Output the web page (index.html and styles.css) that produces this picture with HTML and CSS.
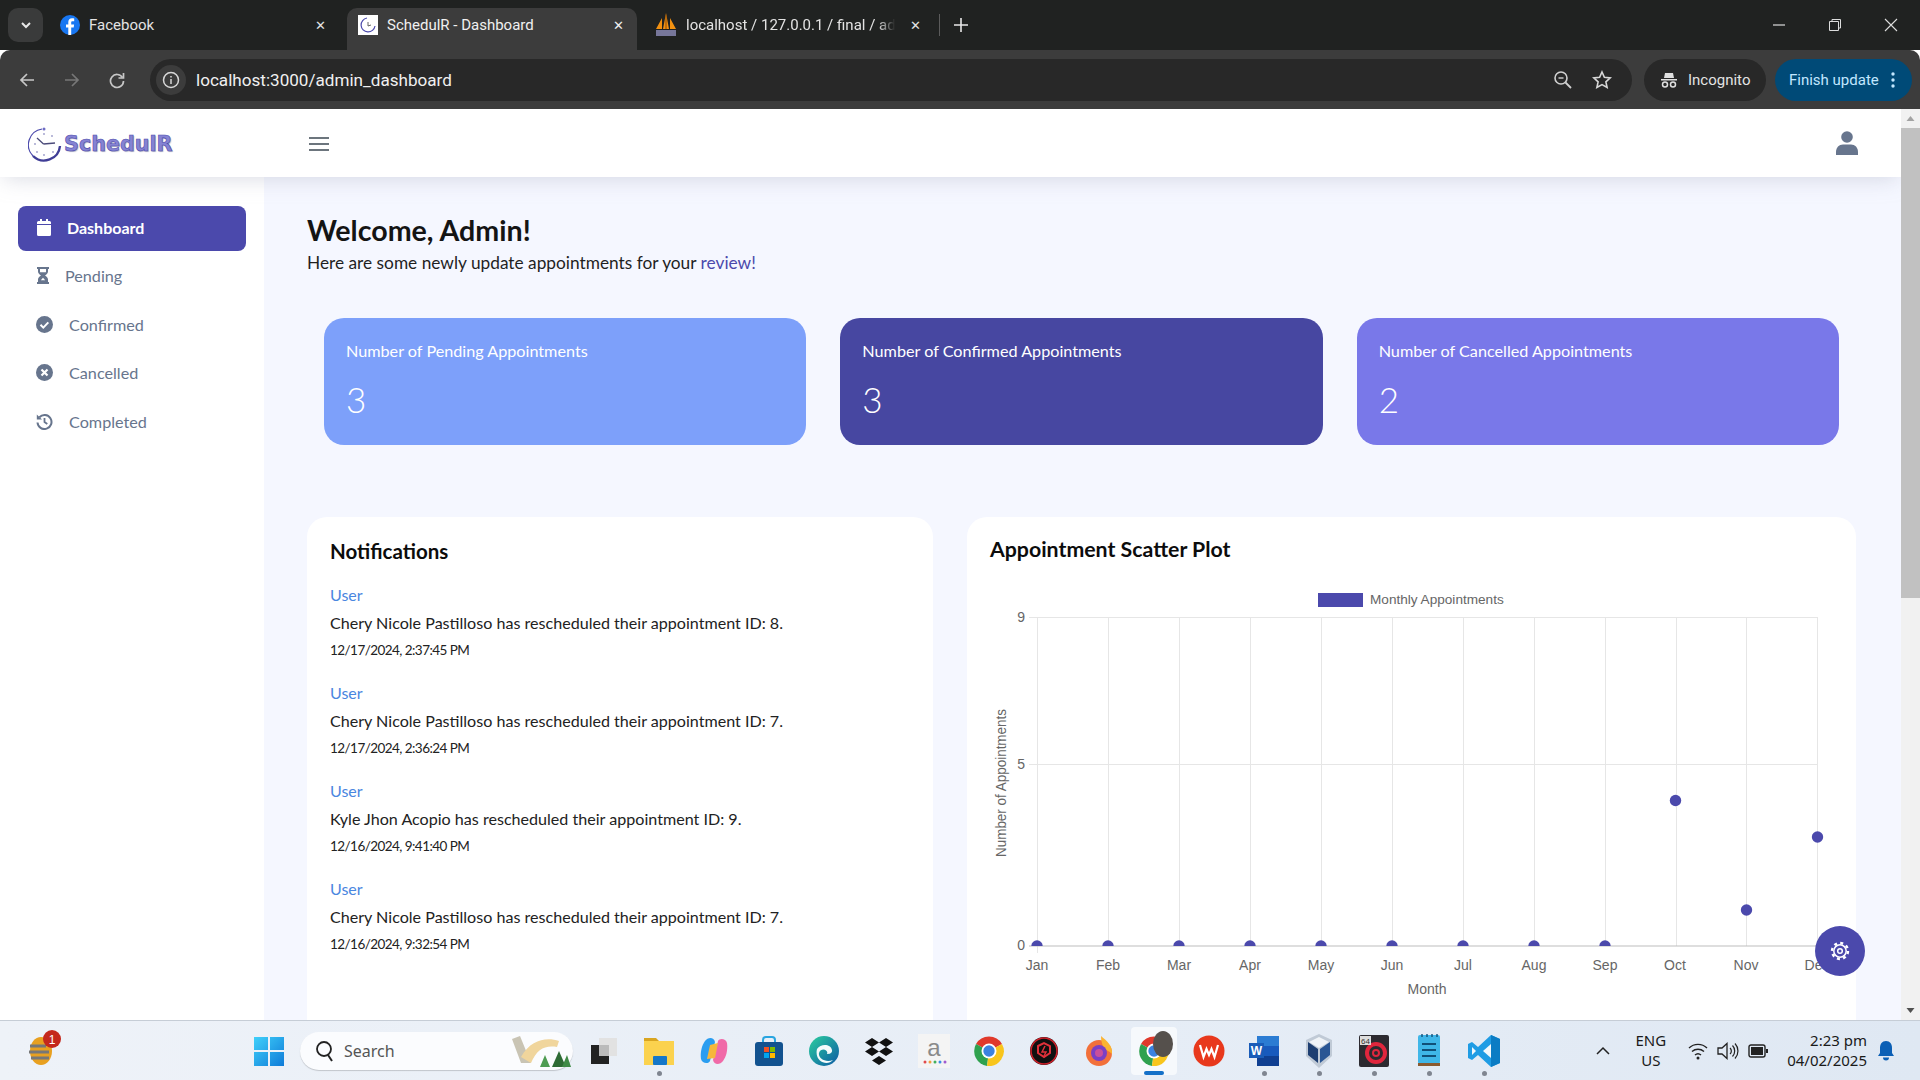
FILE: index.html
```html
<!DOCTYPE html>
<html lang="en">
<head>
  <meta charset="UTF-8">
  <title>SchedulR - Dashboard</title>
  <link rel="stylesheet" href="styles.css">
</head>
<body>
  <!-- browser tabs -->
  <div class="tabstrip">
    <div class="tab-menu"><svg width="12" height="12" viewBox="0 0 12 12"><path d="M2 4l4 4 4-4" fill="none" stroke="#e8e8e8" stroke-width="2"/></svg></div>
    <div class="tab tab-fb">
      <svg class="favicon" width="20" height="20" viewBox="0 0 20 20"><circle cx="10" cy="10" r="10" fill="#1877f2"/><path d="M11.2 20v-7.6h2.5l.4-3h-2.9V7.6c0-.9.3-1.4 1.5-1.4h1.5V3.500c-.5-.1-1.300-.2-2.200-.2-2.200 0-3.700 1.300-3.700 3.800v2.300H6v3h2.300V20z" fill="#fff"/></svg>
      <span class="tab-title">Facebook</span>
      <span class="tab-x">✕</span>
    </div>
    <div class="tab tab-active">
      <svg class="favicon" width="20" height="20" viewBox="0 0 20 20"><rect width="20" height="20" fill="#fff"/><path d="M9 3a7 7 0 1 0 8 8" fill="none" stroke="#4b49ac" stroke-width="1.200"/><path d="M10 7v4l3-1" fill="none" stroke="#555" stroke-width=".9"/></svg>
      <span class="tab-title">SchedulR - Dashboard</span>
      <span class="tab-x">✕</span>
    </div>
    <div class="tab tab-pma">
      <svg class="favicon" width="22" height="24" viewBox="0 0 22 24"><path d="M1 16L7 5v11zM8 16L11 0l3 16zM15 5l6 11h-6z" fill="#f29111"/><path d="M1 17h20v6H1z" fill="#77779a"/><path d="M11 2v14" stroke="#8a4b08"/></svg>
      <span class="tab-title tab-fade">localhost / 127.0.0.1 / final / ad</span>
      <span class="tab-x">✕</span>
    </div>
    <span class="tab-sep"></span>
    <svg class="tab-new" width="14" height="14" viewBox="0 0 14 14"><path d="M7 0v14M0 7h14" stroke="#e8e8e8" stroke-width="1.600"/></svg>
    <div class="win-controls">
      <svg width="14" height="14" viewBox="0 0 14 14"><path d="M1 7h12" stroke="#ddd" stroke-width="1.200"/></svg>
      <svg width="14" height="14" viewBox="0 0 14 14"><path d="M1.500 3.500h9v9h-9zM4 3.500V1.500h8.500v8.500h-2" fill="none" stroke="#ddd"/></svg>
      <svg width="14" height="14" viewBox="0 0 14 14"><path d="M1 1l12 12M13 1L1 13" stroke="#ddd" stroke-width="1.100"/></svg>
    </div>
  </div>

  <!-- browser toolbar -->
  <div class="toolbar">
    <div class="nav-btns">
      <svg width="18" height="18" viewBox="0 0 18 18"><path d="M16 9H3M9 3L3 9l6 6" fill="none" stroke="#c7c7c7" stroke-width="1.700"/></svg>
      <svg width="18" height="18" viewBox="0 0 18 18"><path d="M2 9h13M9 3l6 6-6 6" fill="none" stroke="#777" stroke-width="1.700"/></svg>
      <svg width="18" height="18" viewBox="0 0 18 18"><path d="M14.500 6.500A6.500 6.500 0 1 0 15.500 10" fill="none" stroke="#c7c7c7" stroke-width="1.700"/><path d="M15.500 2v5h-5" fill="none" stroke="#c7c7c7" stroke-width="1.700"/></svg>
    </div>
    <div class="omnibox">
      <div class="site-info"><svg width="18" height="18" viewBox="0 0 18 18"><circle cx="9" cy="9" r="7.500" fill="none" stroke="#d8d8d8" stroke-width="1.500"/><path d="M9 8v5M9 5v1.600" stroke="#d8d8d8" stroke-width="1.500"/></svg></div>
      <span class="url">localhost:3000/admin_dashboard</span>
      <svg class="omni-zoom" width="20" height="20" viewBox="0 0 20 20"><circle cx="8" cy="8" r="6" fill="none" stroke="#d0d0d0" stroke-width="1.600"/><path d="M12.500 12.500L18 18" stroke="#d0d0d0" stroke-width="1.800"/><path d="M5.500 8h5" stroke="#d0d0d0" stroke-width="1.400"/></svg>
      <svg class="omni-star" width="20" height="20" viewBox="0 0 20 20"><path d="M10 2l2.400 5.300 5.800.6-4.300 3.900 1.200 5.700L10 14.600l-5.100 2.900 1.200-5.700L1.800 7.900l5.800-.6z" fill="none" stroke="#d8d8d8" stroke-width="1.600"/></svg>
    </div>
    <div class="incognito">
      <svg width="18" height="18" viewBox="0 0 18 18"><path d="M5 2h8l1 5H4zM1 8h16v1.400H1z" fill="#e0e0e0"/><circle cx="5" cy="13.500" r="2.500" fill="none" stroke="#e0e0e0" stroke-width="1.500"/><circle cx="13" cy="13.500" r="2.500" fill="none" stroke="#e0e0e0" stroke-width="1.500"/></svg>
      <span>Incognito</span>
    </div>
    <div class="finish-update">
      <span>Finish update</span>
      <svg width="4" height="16" viewBox="0 0 4 16"><circle cx="2" cy="2" r="1.700" fill="#c2e7ff"/><circle cx="2" cy="8" r="1.700" fill="#c2e7ff"/><circle cx="2" cy="14" r="1.700" fill="#c2e7ff"/></svg>
    </div>
  </div>

  <!-- the page itself -->
  <div class="viewport">
    <div class="page">
      <header class="app-header">
        <div class="brand">
          <svg width="34" height="36" viewBox="0 0 34 36">
            <path d="M14 3A16 16 0 0 0 5 30" fill="none" stroke="#4b49ac" stroke-width="1.200"/>
            <path d="M5 30a16 16 0 0 0 27-10" fill="none" stroke="#3f3d96" stroke-width="2.400"/>
            <circle cx="16" cy="3" r="1.500" fill="#6e6cc4"/>
            <path d="M15.500 18L9 12M15.500 18L27 17" fill="none" stroke="#4b4b7a" stroke-width="1.300"/>
            <g fill="#9a9ac8"><circle cx="16" cy="8" r=".9"/><circle cx="7" cy="18" r=".9"/><circle cx="16" cy="29" r=".9"/><circle cx="25" cy="26" r=".9"/><circle cx="9" cy="26" r=".9"/><circle cx="24" cy="10" r=".9"/></g>
          </svg>
          <span class="brand-name">SchedulR</span>
        </div>
        <svg class="hamburger" width="20" height="14" viewBox="0 0 20 14"><path d="M0 1h20M0 7h20M0 13h20" stroke="#6c757d" stroke-width="1.800"/></svg>
        <svg class="user-icon" width="22" height="24" viewBox="0 0 22 24"><circle cx="11" cy="6" r="5.800" fill="#67758d"/><path d="M0 24v-3c0-4.500 3-7.500 7-7.500h8c4 0 7 3 7 7.500v3z" fill="#67758d"/></svg>
      </header>

      <div class="page-body">
        <aside class="sidebar">
          <a class="nav-item nav-active">
            <svg width="16" height="17" viewBox="0 0 16 17"><path d="M1 6h14v9.500a1.500 1.500 0 0 1-1.500 1.500h-11A1.500 1.500 0 0 1 1 15.500zM1 5V3.500A1.500 1.500 0 0 1 2.500 2H4V0h2v2h4V0h2v2h1.500A1.500 1.500 0 0 1 15 3.500V5z" fill="#fff"/></svg>
            <span>Dashboard</span>
          </a>
          <a class="nav-item nav-tight">
            <svg width="14" height="17" viewBox="0 0 14 17"><path d="M1 0h12v2h-1v2.500c0 1.800-1.500 3-3 4 1.500 1 3 2.200 3 4V15h1v2H1v-2h1v-2.500c0-1.800 1.500-3 3-4-1.500-1-3-2.200-3-4V2H1zM4 2v2.500c0 .3.100.5.200.7h5.600c.1-.2.200-.4.200-.7V2zM4.800 13.200h4.400L7 10.700z" fill="#67758d"/></svg>
            <span>Pending</span>
          </a>
          <a class="nav-item">
            <svg width="17" height="17" viewBox="0 0 17 17"><circle cx="8.500" cy="8.500" r="8.500" fill="#67758d"/><path d="M4.500 8.800l2.800 2.800 5-5.200" fill="none" stroke="#fff" stroke-width="2"/></svg>
            <span>Confirmed</span>
          </a>
          <a class="nav-item">
            <svg width="17" height="17" viewBox="0 0 17 17"><circle cx="8.500" cy="8.500" r="8.500" fill="#67758d"/><path d="M5.500 5.500l6 6M11.500 5.500l-6 6" stroke="#fff" stroke-width="2.200"/></svg>
            <span>Cancelled</span>
          </a>
          <a class="nav-item">
            <svg width="17" height="17" viewBox="0 0 17 17"><path d="M3.400 4.200A7 7 0 1 1 1.500 9.500" fill="none" stroke="#67758d" stroke-width="2"/><path d="M.8 1.500l5.200 5H.8z" fill="#67758d"/><path d="M8.500 5v4l2.800 2" fill="none" stroke="#67758d" stroke-width="1.800"/></svg>
            <span>Completed</span>
          </a>
        </aside>

        <main class="content">
          <h1 class="welcome">Welcome, Admin!</h1>
          <p class="welcome-sub">Here are some newly update appointments for your <a class="review">review!</a></p>

          <div class="stats">
            <div class="stat stat-pending">
              <p class="stat-label">Number of Pending Appointments</p>
              <p class="stat-num">3</p>
            </div>
            <div class="stat stat-confirmed">
              <p class="stat-label">Number of Confirmed Appointments</p>
              <p class="stat-num">3</p>
            </div>
            <div class="stat stat-cancelled">
              <p class="stat-label">Number of Cancelled Appointments</p>
              <p class="stat-num">2</p>
            </div>
          </div>

          <div class="panels">
            <section class="panel">
              <h2 class="panel-title">Notifications</h2>
              <div class="notif">
                <a class="notif-from">User</a>
                <p class="notif-msg">Chery Nicole Pastilloso has rescheduled their appointment ID: 8.</p>
                <p class="notif-time">12/17/2024, 2:37:45 PM</p>
              </div>
              <div class="notif">
                <a class="notif-from">User</a>
                <p class="notif-msg">Chery Nicole Pastilloso has rescheduled their appointment ID: 7.</p>
                <p class="notif-time">12/17/2024, 2:36:24 PM</p>
              </div>
              <div class="notif">
                <a class="notif-from">User</a>
                <p class="notif-msg">Kyle Jhon Acopio has rescheduled their appointment ID: 9.</p>
                <p class="notif-time">12/16/2024, 9:41:40 PM</p>
              </div>
              <div class="notif">
                <a class="notif-from">User</a>
                <p class="notif-msg">Chery Nicole Pastilloso has rescheduled their appointment ID: 7.</p>
                <p class="notif-time">12/16/2024, 9:32:54 PM</p>
              </div>
            </section>

            <section class="panel panel-chart">
              <h2 class="panel-title">Appointment Scatter Plot</h2>
              <!-- viewBox starts at the panel's top left corner -->
              <svg class="chart" width="889" height="500" viewBox="967 517 889 500">
                <defs><clipPath id="plot-clip"><rect x="1025" y="610" width="800" height="336"/></clipPath></defs>
                <rect x="1318" y="593" width="45" height="14" fill="#4b49ac"/>
                <text class="chart-legend" x="1370" y="604">Monthly Appointments</text>

                <g stroke="#e6e6e6" stroke-width="1">
                  <path d="M1037.500 617v336M1108.500 617v329M1179.500 617v329M1250.500 617v329M1321.500 617v329M1392.500 617v329M1463.500 617v329M1534.500 617v329M1605.500 617v329M1676.500 617v329M1746.500 617v329M1817.500 617v329"/>
                  <path d="M1029 617.500h788M1029 764.500h788"/>
                </g>
                <path d="M1029 946h788" stroke="#bdbdbd" stroke-width="1"/>

                <g class="chart-text" text-anchor="end">
                  <text x="1025" y="622">9</text>
                  <text x="1025" y="769">5</text>
                  <text x="1025" y="950">0</text>
                </g>
                <g class="chart-text" text-anchor="middle">
                  <text x="1037" y="970">Jan</text>
                  <text x="1108" y="970">Feb</text>
                  <text x="1179" y="970">Mar</text>
                  <text x="1250" y="970">Apr</text>
                  <text x="1321" y="970">May</text>
                  <text x="1392" y="970">Jun</text>
                  <text x="1463" y="970">Jul</text>
                  <text x="1534" y="970">Aug</text>
                  <text x="1605" y="970">Sep</text>
                  <text x="1675" y="970">Oct</text>
                  <text x="1746" y="970">Nov</text>
                  <text x="1817" y="970">Dec</text>
                  <text x="1427" y="994">Month</text>
                  <text x="0" y="0" transform="translate(1006 783) rotate(-90)" textLength="148" lengthAdjust="spacingAndGlyphs">Number of Appointments</text>
                </g>

                <g fill="#4b49ac">
                  <g clip-path="url(#plot-clip)">
                    <circle cx="1037" cy="946" r="5.700"/><circle cx="1108" cy="946" r="5.700"/><circle cx="1179" cy="946" r="5.700"/>
                    <circle cx="1250" cy="946" r="5.700"/><circle cx="1321" cy="946" r="5.700"/><circle cx="1392" cy="946" r="5.700"/>
                    <circle cx="1463" cy="946" r="5.700"/><circle cx="1534" cy="946" r="5.700"/><circle cx="1605" cy="946" r="5.700"/>
                  </g>
                  <circle cx="1675.500" cy="800.500" r="5.700"/>
                  <circle cx="1746.500" cy="910" r="5.700"/>
                  <circle cx="1817.500" cy="837" r="5.700"/>
                </g>
              </svg>
            </section>
          </div>
        </main>
      </div>

      <button class="fab">
        <svg width="20" height="20" viewBox="0 0 20 20"><circle cx="10" cy="10" r="8" fill="none" stroke="#fff" stroke-width="2.400" stroke-dasharray="3 3.280"/><circle cx="10" cy="10" r="6.200" fill="#4b49ac" stroke="#fff" stroke-width="1.500"/><circle cx="10" cy="10" r="2.300" fill="none" stroke="#fff" stroke-width="1.500"/></svg>
      </button>
    </div>

    <div class="scrollbar">
      <svg width="19" height="19" viewBox="0 0 19 19"><path d="M9.500 7l4 5h-8z" fill="#a3a3a3"/></svg>
      <div class="scroll-track"><div class="scroll-thumb"></div></div>
      <svg width="19" height="19" viewBox="0 0 19 19"><path d="M9.500 12l-4-5h8z" fill="#505050"/></svg>
    </div>
  </div>

  <!-- windows taskbar -->
  <div class="taskbar">
    <div class="widget">
      <svg width="36" height="38" viewBox="0 0 36 38">
        <ellipse cx="14" cy="22" rx="11" ry="14" fill="#e8a020"/>
        <path d="M3 17h16M2 23h20M4 29h18" stroke="#777" stroke-width="3"/>
        <circle cx="25" cy="10" r="9" fill="#c4281c"/>
        <text class="badge-num" x="25" y="14.500" text-anchor="middle">1</text>
      </svg>
    </div>
    <div class="task-start">
      <svg width="30" height="30" viewBox="0 0 30 30"><defs><linearGradient id="win" x1="0" y1="0" x2="1" y2="1"><stop offset="0" stop-color="#3fd0fa"/><stop offset="1" stop-color="#0f7bd8"/></linearGradient></defs><path d="M0 1h14v13H0zM16 1h14v13H16zM0 16h14v14H0zM16 16h14v14H16z" fill="url(#win)"/></svg>
    </div>
    <div class="task-search">
      <svg width="20" height="22" viewBox="0 0 20 22"><circle cx="9" cy="9" r="7" fill="none" stroke="#222" stroke-width="1.800"/><path d="M13 15l4 6" stroke="#222" stroke-width="2"/></svg>
      <span>Search</span>
      <svg class="search-art" width="62" height="36" viewBox="0 0 62 36">
        <path d="M3 6l9 24h10L11 3z" fill="#c9c4b4"/>
        <path d="M12 24C22 6 38 4 50 8l-2 6C36 12 28 16 22 30z" fill="#f0d59c"/>
        <path d="M50 18l-7 16h14z" fill="#2e6b34"/><path d="M58 22l-5 12h9z" fill="#3f8a45"/>
        <path d="M36 22l-5 12h10z" fill="#4e9c52"/>
      </svg>
    </div>
    <div class="task-icons">
      <div class="task-icon">
        <svg width="28" height="28" viewBox="0 0 28 28"><rect x="9" y="1" width="18" height="18" fill="#e2e2e2"/><rect x="1" y="8" width="18" height="19" fill="#222"/><rect x="9" y="8" width="10" height="11" fill="#bbb"/></svg>
      </div>
      <div class="task-icon task-open">
        <svg width="32" height="30" viewBox="0 0 32 30"><path d="M1 2h12l3 3h-15z" fill="#d9a520"/><rect x="1" y="5" width="30" height="24" fill="#fbd24e"/><rect x="10" y="20" width="14" height="9" rx="1" fill="#1577c8"/></svg>
      </div>
      <div class="task-icon">
        <svg width="30" height="30" viewBox="0 0 30 30"><path d="M6 5c3-4 9-4 10 1l-5 19c-1 3-8 3-9-2C1 16 3 9 6 5z" fill="#2a9df0"/><path d="M24 25c-3 4-9 4-10-1l5-19c1-3 8-3 9 2 1 7-1 14-4 18z" fill="#f06aa8"/><path d="M11 9l8-2-3 15-8 1z" fill="#f6b73c"/></svg>
      </div>
      <div class="task-icon">
        <svg width="30" height="30" viewBox="0 0 30 30"><path d="M9 8V4a3 3 0 0 1 3-3h6a3 3 0 0 1 3 3v4" fill="none" stroke="#29a5e0" stroke-width="2"/><rect x="1" y="6" width="28" height="24" rx="3" fill="#12528f"/><path d="M10 11h5v5h-5z" fill="#f25022"/><path d="M16 11h5v5h-5z" fill="#7fba00"/><path d="M10 17h5v5h-5z" fill="#00a4ef"/><path d="M16 17h5v5h-5z" fill="#ffb900"/></svg>
      </div>
      <div class="task-icon">
        <svg width="30" height="30" viewBox="0 0 30 30"><defs><linearGradient id="edge" x1="0" y1="0" x2="1" y2="1"><stop offset="0" stop-color="#2ccf9e"/><stop offset="1" stop-color="#0c59a4"/></linearGradient></defs><circle cx="15" cy="15" r="15" fill="url(#edge)"/><path d="M8 13c4-6 14-5 15 1 .5 3-2 4-5 4 2-4-6-7-8-1-1 5 6 10 14 7-6 7-19 1-16-11z" fill="#f4fbfb"/></svg>
      </div>
      <div class="task-icon">
        <svg width="30" height="28" viewBox="0 0 30 28"><path d="M8 1l7 4.500L8 10 1 5.500zM22 1l7 4.500L22 10l-7-4.500zM8 10l7 4.500L8 19l-7-4.500zM22 10l7 4.500L22 19l-7-4.500zM15 19l7 4.500L15 28l-7-4.500z" fill="#111"/></svg>
      </div>
      <div class="task-icon">
        <svg width="32" height="34" viewBox="0 0 32 34"><rect width="32" height="34" fill="#f4f4f4"/><text class="amazon-a" x="16" y="22" text-anchor="middle">a</text><g><circle cx="7" cy="28" r="1.500" fill="#e24a4a"/><circle cx="12" cy="28" r="1.500" fill="#f2a03d"/><circle cx="17" cy="28" r="1.500" fill="#43b05c"/><circle cx="22" cy="28" r="1.500" fill="#3a8ee6"/><circle cx="27" cy="28" r="1.500" fill="#a05ad0"/></g></svg>
      </div>
      <div class="task-icon">
        <svg width="30" height="30" viewBox="0 0 30 30"><use href="#chrome-logo"/></svg>
      </div>
      <div class="task-icon">
        <svg width="28" height="30" viewBox="0 0 28 30"><circle cx="14" cy="15" r="14" fill="#101010"/><circle cx="14" cy="15" r="13" fill="none" stroke="#d0202a" stroke-width="1.500"/><path d="M8 10l6-3 6 3v7l-6 4-6-4z" fill="none" stroke="#e0303a" stroke-width="2"/><path d="M15 10l-3 6h4l-2 4" fill="none" stroke="#e0303a" stroke-width="1.500"/></svg>
      </div>
      <div class="task-icon">
        <svg width="30" height="30" viewBox="0 0 30 30"><circle cx="15" cy="17" r="13" fill="#f2703a"/><path d="M17 0c6 5 12 10 11 18-3-3-6-4-8-5-2-5-3-8-3-13z" fill="#fbb331"/><circle cx="15" cy="17" r="8" fill="#7b3fc4"/><circle cx="15" cy="17" r="4" fill="#c94f9b"/></svg>
      </div>
      <div class="task-icon task-current">
        <svg width="30" height="30" viewBox="0 0 30 30"><use href="#chrome-logo"/></svg>
        <span class="task-avatar"></span>
      </div>
      <div class="task-icon">
        <svg width="32" height="32" viewBox="0 0 32 32"><circle cx="16" cy="16" r="15.500" fill="#e8381c"/><path d="M7 10l3.500 12 3-8 2.500 6 2.500-6 3 8L25 10" fill="none" stroke="#fff" stroke-width="2.200"/></svg>
      </div>
      <div class="task-icon task-open">
        <svg width="32" height="30" viewBox="0 0 32 30"><path d="M9 0h22v30H9z" fill="#2b7cd3"/><path d="M9 10h22v10H9z" fill="#185abd"/><path d="M9 20h22v10H9z" fill="#103f91"/><rect x="1" y="7" width="15" height="15" fill="#1a5cb8"/><text class="word-w" x="8.500" y="19" text-anchor="middle">W</text></svg>
      </div>
      <div class="task-icon task-open">
        <svg width="28" height="34" viewBox="0 0 28 34"><path d="M14 0l13 6v16l-13 12L1 22V6z" fill="#c0cad6"/><path d="M14 3l10 5-10 6-10-6z" fill="#f0f4f8"/><path d="M3 8l10 7v14L3 21z" fill="#1e3f72"/><path d="M25 8l-10 7v14l10-8z" fill="#2a5694"/></svg>
      </div>
      <div class="task-icon task-open">
        <svg width="30" height="32" viewBox="0 0 30 32"><rect width="30" height="32" rx="2" fill="#2c2a30"/><circle cx="17" cy="18" r="9" fill="none" stroke="#e0263d" stroke-width="4"/><circle cx="17" cy="18" r="3" fill="none" stroke="#e0263d" stroke-width="2"/><rect x="1" y="1" width="11" height="9" fill="#ddd"/><text class="app-64" x="6.500" y="8.500" text-anchor="middle">64</text></svg>
      </div>
      <div class="task-icon task-open">
        <svg width="22" height="34" viewBox="0 0 22 34"><rect y="1" width="22" height="29" rx="2" fill="#3fb6e8"/><path d="M0 29h22v3H0z" fill="#8a5a30"/><path d="M4 10h14M4 16h14M4 22h14" stroke="#104f78" stroke-width="2"/><path d="M4 0v3M9 0v3M14 0v3M19 0v3" stroke="#104f78" stroke-width="1.400"/></svg>
      </div>
      <div class="task-icon task-open">
        <svg width="32" height="32" viewBox="0 0 32 32"><path d="M23 0l9 4v24l-9 4-13-12-6 5-4-2v-14l4-2 6 5z" fill="#1f9ce4"/><path d="M23 0l9 4v24l-9 4z" fill="#0b7cc4"/><path d="M23 9l-8 7 8 7z" fill="#f2f8fc"/><path d="M4 12v8l4-4z" fill="#f2f8fc"/></svg>
      </div>
    </div>
    <div class="tray">
      <svg class="tray-chev" width="14" height="9" viewBox="0 0 14 9"><path d="M1 8l6-6 6 6" fill="none" stroke="#222" stroke-width="1.500"/></svg>
      <div class="tray-lang"><span>ENG</span><span>US</span></div>
      <div class="tray-icons">
        <svg width="20" height="18" viewBox="0 0 20 18"><path d="M1 6a13 13 0 0 1 18 0M4 9.500a9 9 0 0 1 12 0M7 13a4.500 4.500 0 0 1 6 0" fill="none" stroke="#222" stroke-width="1.400"/><circle cx="10" cy="16" r="1.500" fill="#222"/></svg>
        <svg width="22" height="18" viewBox="0 0 22 18"><path d="M1 6h4l5-4.500v15L5 12H1z" fill="none" stroke="#222" stroke-width="1.300"/><path d="M13 6a4 4 0 0 1 0 6M15.500 3.500a8 8 0 0 1 0 11M18 1.500a11 11 0 0 1 0 15" fill="none" stroke="#222" stroke-width="1.200"/></svg>
        <svg width="21" height="14" viewBox="0 0 21 14"><rect x="1" y="1" width="16" height="12" rx="2" fill="none" stroke="#222" stroke-width="1.400"/><rect x="3" y="3" width="12" height="8" fill="#222"/><rect x="18" y="5" width="2" height="4" fill="#222"/></svg>
      </div>
      <div class="tray-clock"><span>2:23 pm</span><span>04/02/2025</span></div>
      <svg class="tray-bell" width="18" height="20" viewBox="0 0 18 20"><path d="M9 0c-4 0-6 3-6 7v5l-2 3h16l-2-3V7c0-4-2-7-6-7z" fill="#0b5fb5"/><path d="M6 16.500h6a3 3 0 0 1-6 0z" fill="#0b5fb5"/></svg>
    </div>
  </div>

  <!-- shared chrome logo -->
  <svg class="svg-defs" width="0" height="0">
    <g id="chrome-logo">
      <path d="M15 15L2 8a15 15 0 0 1 26 0z" fill="#e0392b"/>
      <path d="M15 15L2 8a15 15 0 0 0 11 22z" fill="#2fa14f"/>
      <path d="M15 15l13-7a15 15 0 0 1-15 22z" fill="#f8c51c"/>
      <circle cx="15" cy="15" r="7.500" fill="#fff"/>
      <circle cx="15" cy="15" r="5.700" fill="#3b82e0"/>
    </g>
  </svg>
</body>
</html>
```

FILE: styles.css
```css
*{
  box-sizing: border-box;
}
html, body{
  margin: 0;
  height: 100%;
  overflow: hidden;
}
body{
  display: flex;
  flex-direction: column;
  width: 1920px;
  height: 1080px;
  font-family: "Lato", "Open Sans", sans-serif;
}
p, h1, h2{
  margin: 0;
}
.svg-defs{
  position: absolute;
}

/* browser tabs */
.tabstrip{
  display: flex;
  align-items: flex-end;
  height: 50px;
  padding-left: 8px;
  background: #202221;
  color: #e3e3e3;
  font-family: "Roboto", sans-serif;
  font-size: 15px;
}
.tab-menu{
  display: flex;
  align-items: center;
  justify-content: center;
  width: 35px;
  height: 34px;
  margin-bottom: 8px;
  border-radius: 10px;
  background: #3a3b3b;
}
.tab{
  display: flex;
  align-items: center;
  height: 42px;
  padding-bottom: 8px;
}
.tab-fb{
  width: 304px;
  padding-left: 17px;
}
.tab-fb .tab-x{
  margin-right: 20px;
}
.tab-active{
  width: 290px;
  padding-left: 11px;
  background: #3c3c3c;
  border-radius: 10px 10px 0 0;
  color: #f0f0f0;
}
.tab-pma{
  width: 297px;
  padding-left: 18px;
}
.tab-pma .tab-x{
  margin-left: 4px;
}
.favicon{
  flex: none;
}
.tab-title{
  flex: 1;
  margin-left: 9px;
  white-space: nowrap;
  overflow: hidden;
}
.tab-fade{
  -webkit-mask-image: linear-gradient(to right, #000 88%, transparent 96%);
  mask-image: linear-gradient(to right, #000 88%, transparent 96%);
}
.tab-x{
  width: 14px;
  margin: 0 12px 0 14px;
  font-size: 13px;
  text-align: center;
}
.tab-sep{
  width: 1px;
  height: 22px;
  margin: 0 14px 14px 5px;
  background: #5b5b5b;
}
.tab-new{
  margin: 0 0 18px 0;
}
.win-controls{
  display: flex;
  gap: 42px;
  margin: 0 22px 18px auto;
}

/* browser toolbar */
.toolbar{
  display: flex;
  align-items: center;
  height: 59px;
  padding: 0 8px 0 18px;
  background: #3c3c3c;
  border-radius: 10px 10px 0 0;
}
.nav-btns{
  display: flex;
  gap: 27px;
  width: 132px;
}
.omnibox{
  display: flex;
  align-items: center;
  width: 1482px;
  height: 42px;
  padding-left: 6px;
  background: #282828;
  border-radius: 21px;
  color: #f0f0f0;
  font-family: "Roboto", sans-serif;
  font-size: 17.100px;
}
.site-info{
  display: flex;
  align-items: center;
  justify-content: center;
  width: 30px;
  height: 30px;
  border-radius: 50%;
  background: #3c3c3c;
}
.url{
  margin-left: 10px;
}
.omni-zoom{
  margin-left: auto;
}
.omni-star{
  margin: 0 20px 0 19px;
}
.incognito{
  display: flex;
  align-items: center;
  gap: 10px;
  width: 122px;
  height: 42px;
  margin-left: 12px;
  padding-left: 16px;
  background: #282828;
  border-radius: 21px;
  color: #e3e3e3;
  font-family: "Roboto", sans-serif;
  font-size: 15px;
}
.finish-update{
  display: flex;
  align-items: center;
  gap: 12px;
  width: 137px;
  height: 42px;
  margin-left: 9px;
  padding-left: 14px;
  background: #004a77;
  border-radius: 21px;
  color: #c2e7ff;
  font-family: "Roboto", sans-serif;
  font-size: 15px;
}

/* page */
.viewport{
  display: flex;
  height: 911px;
}
.page{
  position: relative;
  display: flex;
  flex-direction: column;
  width: 1901px;
  overflow: hidden;
  background: #f5f7ff;
}
.app-header{
  position: relative;
  z-index: 2;
  display: flex;
  align-items: center;
  flex: none;
  height: 68px;
  padding: 2px 43px 0 28px;
  background: #fff;
  box-shadow: 0 5px 21px -4px rgba(182, 186, 203, .55);
}
.brand{
  display: flex;
  align-items: center;
  gap: 2px;
  width: 281px;
}
.brand-name{
  font-family: "DejaVu Sans", sans-serif;
  font-size: 20.700px;
  font-weight: 700;
  color: #8583d3;
  -webkit-text-stroke: .6px #4b49ac;
  text-shadow: 1px 1px 1px #b5b5c8;
}
.user-icon{
  margin-left: auto;
  margin-top: -2px;
}
.page-body{
  display: flex;
  flex: 1;
  min-height: 0;
}

/* sidebar */
.sidebar{
  flex: none;
  display: flex;
  flex-direction: column;
  width: 264px;
  padding: 29px 18px 0;
  background: #fff;
}
.nav-item{
  display: flex;
  align-items: center;
  gap: 16px;
  height: 48.700px;
  padding-left: 18px;
  color: #67758d;
  font-size: 16.200px;
}
.nav-tight{
  gap: 15px;
}
.nav-active{
  height: 45px;
  padding-bottom: 2px;
  gap: 15px;
  border-radius: 8px;
  background: #4b49ac;
  color: #fff;
  font-size: 16px;
  font-weight: 700;
}

/* main content */
.content{
  flex: 1;
  min-width: 0;
  padding: 36px 45px 0 43px;
}
.welcome{
  font-size: 28.600px;
  line-height: 34px;
  font-weight: 700;
  color: #141414;
}
.welcome-sub{
  margin-top: 4px;
  font-size: 17.300px;
  line-height: 24px;
  color: #1f1f1f;
}
.review{
  color: #4b49ac;
}
.stats{
  display: grid;
  grid-template-columns: repeat(3, 1fr);
  gap: 34px;
  margin-top: 43px;
  padding: 0 17px;
}
.stat{
  height: 127px;
  padding: 22px 22px 0;
  border-radius: 20px;
  color: #fff;
}
.stat-pending{
  background: #7da0fa;
}
.stat-confirmed{
  background: #4747a1;
}
.stat-cancelled{
  background: #7978e9;
}
.stat-label{
  font-size: 16.200px;
  line-height: 22px;
}
.stat-num{
  margin-top: 15px;
  font-size: 35px;
  line-height: 44px;
  font-weight: 300;
}
.panels{
  display: grid;
  grid-template-columns: 626px 1fr;
  gap: 34px;
  margin-top: 72px;
}
.panel{
  height: 560px;
  padding: 20px 23px;
  border-radius: 20px;
  background: #fff;
}
.panel-title{
  font-size: 20.500px;
  line-height: 28px;
  font-weight: 700;
  color: #0c0c0c;
}
.panel-chart{
  position: relative;
  padding-top: 18px;
}
.panel-chart .panel-title{
  font-size: 21.300px;
}
.chart{
  position: absolute;
  left: 0;
  top: 0;
}
.chart-text, .chart-text text{
  font-family: "Liberation Sans", sans-serif;
  font-size: 14px;
  fill: #666;
}
.chart-legend{
  font-family: "Liberation Sans", sans-serif;
  font-size: 13.600px;
  fill: #666;
}
.notif{
  height: 98px;
}
.panel > .panel-title + .notif{
  margin-top: 18px;
}
.notif-from{
  display: block;
  font-size: 16px;
  line-height: 24px;
  color: #4a86e0;
}
.notif-msg{
  margin-top: 4px;
  font-size: 16.100px;
  line-height: 24px;
  color: #222;
}
.notif-time{
  margin-top: 5px;
  font-size: 13.500px;
  line-height: 20px;
  letter-spacing: -.55px;
  color: #222;
}

/* floating settings button */
.fab{
  position: absolute;
  right: 36px;
  bottom: 44px;
  z-index: 3;
  display: flex;
  align-items: center;
  justify-content: center;
  width: 50px;
  height: 50px;
  padding: 0;
  border: none;
  border-radius: 50%;
  background: #4b49ac;
}

/* scrollbar */
.scrollbar{
  display: flex;
  flex-direction: column;
  width: 19px;
  background: #f1f1f1;
}
.scroll-track{
  flex: 1;
}
.scroll-thumb{
  height: 470px;
  background: #c1c1c1;
}

/* windows taskbar */
.taskbar{
  display: flex;
  align-items: center;
  height: 60px;
  border-top: 1px solid #c6cdd6;
  background: linear-gradient(to right, #eef2f8, #e6edf6 60%, #dfe8f3);
  color: #1a1a1a;
  font-family: "Noto Sans", sans-serif;
}
.widget{
  width: 241px;
  padding-left: 27px;
}
.badge-num{
  font-family: "Liberation Sans", sans-serif;
  font-size: 12px;
  fill: #fff;
}
.task-start{
  display: flex;
  justify-content: center;
  width: 55px;
}
.task-search{
  display: flex;
  align-items: center;
  width: 273px;
  height: 38px;
  margin-left: 4px;
  padding-left: 15px;
  border-radius: 19px;
  background: #fbfcfe;
  box-shadow: 0 1px 1px rgba(0, 0, 0, .18);
  color: #555;
  font-size: 16px;
}
.task-search span{
  margin-left: 9px;
}
.search-art{
  margin-left: auto;
  margin-right: 2px;
}
.task-icons{
  display: flex;
  margin-left: 3.500px;
}
.task-icon{
  position: relative;
  display: flex;
  align-items: center;
  justify-content: center;
  width: 55px;
  height: 48px;
}
.task-open::after{
  content: "";
  position: absolute;
  left: 25px;
  bottom: -1px;
  width: 5px;
  height: 5px;
  border-radius: 50%;
  background: #7f8590;
}
.task-current{
  border-radius: 4px;
  background: #f6f9fc;
  width: 46px;
  margin: 0 4.500px;
}
.task-current::after{
  content: "";
  position: absolute;
  left: 13px;
  bottom: 0;
  width: 20px;
  height: 4px;
  border-radius: 2px;
  background: #1470c8;
}
.task-avatar{
  position: absolute;
  top: 4px;
  right: 4px;
  width: 20px;
  height: 26px;
  border-radius: 50%;
  background: #55504c;
}
.amazon-a{
  font-family: "Liberation Sans", sans-serif;
  font-size: 24px;
  fill: #8a8a8a;
}
.word-w{
  font-family: "Liberation Sans", sans-serif;
  font-size: 12px;
  font-weight: 700;
  fill: #fff;
}
.app-64{
  font-family: "Liberation Sans", sans-serif;
  font-size: 8px;
  fill: #333;
}
.tray{
  display: flex;
  align-items: center;
  margin-left: 84px;
  font-size: 15px;
}
.tray-lang, .tray-clock{
  display: flex;
  flex-direction: column;
  line-height: 20px;
  margin-top: -2px;
}
.tray-lang{
  align-items: center;
  margin-left: 26px;
}
.tray-icons{
  display: flex;
  align-items: center;
  gap: 9px;
  margin-left: 22px;
}
.tray-clock{
  align-items: flex-end;
  margin-left: 18px;
}
.tray-bell{
  margin-left: 10px;
}
```
